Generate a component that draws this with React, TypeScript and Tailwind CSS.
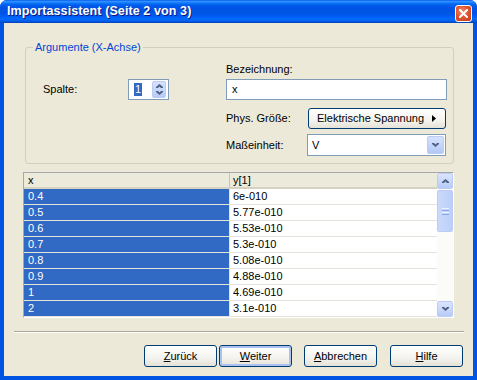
import React from 'react';

const rows: [string, string][] = [
  ['0.4', '6e-010'],
  ['0.5', '5.77e-010'],
  ['0.6', '5.53e-010'],
  ['0.7', '5.3e-010'],
  ['0.8', '5.08e-010'],
  ['0.9', '4.88e-010'],
  ['1', '4.69e-010'],
  ['2', '3.1e-010'],
];

const Chevron = ({ up = false }: { up?: boolean }) => (
  <svg width="7" height="4" viewBox="0 0 7 4" className={up ? 'rotate-180' : ''}>
    <path d="M0 0h2l1.5 1.5L5 0h2v1L3.5 4 0 1z" fill="#4d6185" />
  </svg>
);

const XpButton = ({ label, hot, focused = false }: { label: string; hot: number; focused?: boolean }) => (
  <button
    className={`w-[73px] h-[22px] rounded-[3px] border border-[#003c74] bg-[linear-gradient(180deg,#ffffff_0%,#f4f3ee_60%,#e4e1d6_100%)] text-[11px] text-black leading-none ${
      focused ? 'shadow-[inset_0_0_0_2px_#a9c3f0]' : ''
    }`}
  >
    {label.slice(0, hot)}
    <span className="underline underline-offset-1">{label[hot]}</span>
    {label.slice(hot + 1)}
  </button>
);

export default function App() {
  return (
    <div className="w-[477px] h-[380px] flex flex-col bg-[#0054e3] font-['Liberation_Sans',Arial,sans-serif] text-[11px] text-black rounded-t-[7px] overflow-hidden select-none">
      {/* Title bar */}
      <div className="h-[23px] shrink-0 relative flex items-center pl-[7px] bg-[linear-gradient(180deg,#0058ee_0%,#3593ff_6%,#127dff_12%,#0262ee_20%,#0055e6_30%,#0054e3_56%,#005bf5_70%,#026afe_82%,#0062ef_90%,#0050d4_96%,#003aa8_100%)]">
        <span className="text-white font-bold text-[12.5px] tracking-[0.1px] [text-shadow:1px_1px_#0a1883]">
          Importassistent (Seite 2 von 3)
        </span>
        <div className="absolute right-[5px] top-[5px] w-[17px] h-[17px] rounded-[3px] border border-white bg-[radial-gradient(circle_at_40%_35%,#f28a6c_0%,#e0552f_45%,#c23a15_100%)] flex items-center justify-center">
          <svg width="9" height="9" viewBox="0 0 9 9">
            <path d="M1 1l7 7M8 1L1 8" stroke="white" strokeWidth="2" strokeLinecap="square" />
          </svg>
        </div>
      </div>

      {/* Client area */}
      <div className="flex-1 mx-[4px] mb-[4px] bg-[#ece9d8] flex flex-col">
        {/* Group box */}
        <fieldset className="mt-[18px] ml-[21px] w-[429px] border border-[#d0d0bf] rounded-[3px]">
          <legend className="ml-[7px] px-[2px] leading-[13px] text-[#0046d5]">Argumente (X-Achse)</legend>
          <div className="flex">
            <div className="w-[200px] pl-[17px] pt-[25px]">
              <div className="flex items-center">
                <span className="w-[85px]">Spalte:</span>
                <div className="w-[41px] h-[21px] border border-[#7f9db9] bg-white flex items-center pl-[5px] pr-[2px]">
                  <span className="bg-[#316ac5] text-white leading-[13px] px-[1px]">1</span>
                  <div className="ml-auto w-[14px] h-[17px] rounded-[2px] border border-[#b9cbf6] bg-[linear-gradient(180deg,#d6e2fd,#b8cbf8)] flex flex-col items-center justify-center gap-[3px]">
                    <Chevron up />
                    <Chevron />
                  </div>
                </div>
              </div>
            </div>
            <div className="flex-1 pt-[9px] pb-[7px]">
              <div className="h-[13px] leading-[13px]">Bezeichnung:</div>
              <div className="mt-[3px] w-[221px] h-[21px] border border-[#7f9db9] bg-white flex items-center pl-[5px]">x</div>
              <div className="mt-[8px] flex items-center">
                <span className="w-[82px]">Phys. Größe:</span>
                <div className="w-[138px] h-[21px] rounded-[3px] border border-[#003c74] bg-[linear-gradient(180deg,#ffffff_0%,#f4f3ee_60%,#e4e1d6_100%)] flex items-center pl-[8px] pr-[9px]">
                  <span>Elektrische Spannung</span>
                  <svg width="4" height="7" viewBox="0 0 4 7" className="ml-auto">
                    <path d="M0 0l4 3.5L0 7z" fill="black" />
                  </svg>
                </div>
              </div>
              <div className="mt-[5px] flex items-center">
                <span className="w-[81px]">Maßeinheit:</span>
                <div className="w-[139px] h-[22px] border border-[#7f9db9] bg-white flex items-center pl-[4px] pr-[1px]">
                  <span>V</span>
                  <div className="ml-auto w-[17px] h-[18px] rounded-[2px] border border-[#b9cbf6] bg-[linear-gradient(180deg,#d6e2fd,#b3c8f7)] flex items-center justify-center">
                    <Chevron />
                  </div>
                </div>
              </div>
            </div>
          </div>
        </fieldset>

        {/* Data table */}
        <div className="mt-[8px] ml-[19px] w-[431px] h-[146px] border border-t-[#a7a6aa] border-l-[#a7a6aa] border-r-white border-b-white bg-white flex">
          <div className="w-[413px] flex flex-col">
            <div className="h-[16px] flex bg-[#ebeadb] border-b-[2px] border-[#d6d2c2]">
              <div className="w-[206px] pl-[4px] leading-[14px] border-r border-[#c7c5b2]">x</div>
              <div className="flex-1 pl-[3px] leading-[14px]">y[1]</div>
            </div>
            {rows.map(([x, y]) => (
              <div key={x} className="h-[16px] flex border-b border-[#e5e4dc]">
                <div className="w-[206px] pl-[4px] leading-[15px] bg-[#316ac5] text-white border-r border-[#e5e4dc]">{x}</div>
                <div className="flex-1 pl-[3px] leading-[15px]">{y}</div>
              </div>
            ))}
          </div>
          {/* Scrollbar */}
          <div className="w-[16px] bg-[#fbfbf8] flex flex-col">
            <div className="h-[16px] rounded-[2px] border border-[#b9cbf6] bg-[linear-gradient(180deg,#dbe5fd,#b7cbf7)] flex items-center justify-center">
              <Chevron up />
            </div>
            <div className="mt-[1px] h-[42px] rounded-[2px] border border-[#b9cbf6] bg-[linear-gradient(90deg,#cad9fc,#bccff9)] flex flex-col items-center justify-center gap-[1px]">
              <div className="w-[7px] h-[1px] bg-[#eef3fe]" />
              <div className="w-[7px] h-[1px] bg-[#8caae6]" />
              <div className="w-[7px] h-[1px] bg-[#eef3fe]" />
              <div className="w-[7px] h-[1px] bg-[#8caae6]" />
            </div>
            <div className="mt-auto h-[16px] rounded-[2px] border border-[#b9cbf6] bg-[linear-gradient(180deg,#dbe5fd,#b7cbf7)] flex items-center justify-center">
              <Chevron />
            </div>
          </div>
        </div>

        {/* Separator */}
        <div className="mt-[13px] ml-[10px] w-[450px] h-[2px] border-t border-[#aca899] border-b border-b-white" />

        {/* Buttons */}
        <div className="mt-[12px] flex pl-[140px]">
          <XpButton label="Zurück" hot={0} />
          <div className="ml-[2px]">
            <XpButton label="Weiter" hot={0} focused />
          </div>
          <div className="ml-[12px]">
            <XpButton label="Abbrechen" hot={0} />
          </div>
          <div className="ml-[13px]">
            <XpButton label="Hilfe" hot={0} />
          </div>
        </div>
      </div>
    </div>
  );
}
